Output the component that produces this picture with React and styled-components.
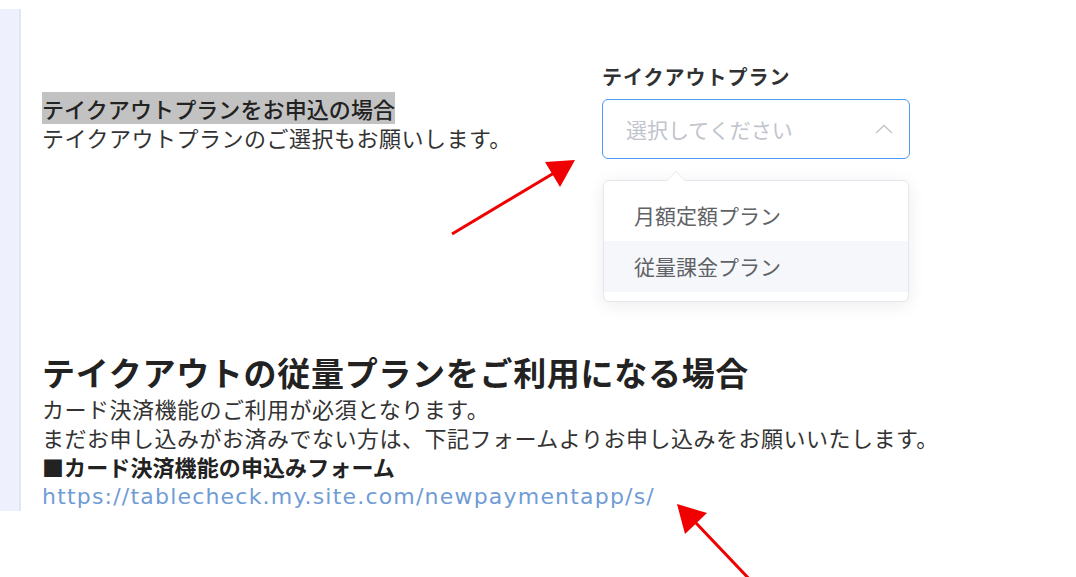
import React from 'react';
import styled, { createGlobalStyle } from 'styled-components';

const GlobalStyle = createGlobalStyle`
  body {
    margin: 0;
    background: #ffffff;
    font-family: "Noto Sans CJK JP", "DejaVu Sans", sans-serif;
    color: #333333;
  }
`;

const Screen = styled.div`
  position: relative;
  width: 1076px;
  height: 577px;
  overflow: hidden;
`;

const Page = styled.div`
  margin-top: 9px;
  height: 502px;
  display: flex;
  overflow: hidden;
`;

const Sidebar = styled.aside`
  width: 19px;
  flex-shrink: 0;
  background: #eef0fd;
  border-right: 2px solid #e4e6ef;
`;

const Main = styled.main`
  flex: 1;
  padding: 53px 0 0 21px;
  font-family: "Noto Sans CJK JP", sans-serif;
  font-size: 22px;
  line-height: 29px;
  color: #333333;
`;

const TopRow = styled.div`
  display: flex;
  align-items: flex-start;
`;

const Intro = styled.div`
  width: 560px;
  margin-top: 32px;
`;

const Marked = styled.span`
  background: #c2c2c2;
  color: #222222;
  font-weight: 500;
  letter-spacing: 0.1px;
`;

const Line = styled.div`
  font-weight: ${p => (p.$bold ? 700 : 400)};
  color: ${p => (p.$bold ? '#222222' : '#333333')};
  letter-spacing: ${p => (p.$bold ? '0.1px' : '0.5px')};
`;

const Field = styled.div`
  position: relative;
  width: 308px;
`;

const Label = styled.div`
  font-size: 20px;
  line-height: 30px;
  font-weight: 700;
  letter-spacing: 1px;
  color: #303133;
  margin-bottom: 7px;
`;

const Select = styled.div`
  box-sizing: border-box;
  height: 60px;
  border: 1px solid #4d9cf3;
  border-radius: 6px;
  display: flex;
  align-items: center;
  justify-content: space-between;
  padding: 0 16px 0 23px;
  font-size: 21px;
  color: #c0c4cc;
`;

const Dropdown = styled.ul`
  position: absolute;
  top: 118px;
  left: 1px;
  width: 306px;
  box-sizing: border-box;
  margin: 0;
  padding: 9px 0;
  list-style: none;
  background: #ffffff;
  border: 1px solid #e4e7ed;
  border-radius: 6px;
  box-shadow: 0 3px 18px rgba(0, 0, 0, 0.08);

  &::before,
  &::after {
    content: '';
    position: absolute;
    left: 63px;
    border-style: solid;
    border-width: 0 9px 9px 9px;
    border-color: transparent;
  }
  &::before {
    top: -10px;
    border-bottom-color: #e4e7ed;
  }
  &::after {
    top: -9px;
    border-bottom-color: #ffffff;
  }
`;

const Option = styled.li`
  height: 51px;
  line-height: 51px;
  padding: 0 30px;
  font-size: 21px;
  color: #606266;
  background: ${p => (p.$hover ? '#f5f7fa' : 'transparent')};
`;

const Heading = styled.h2`
  margin: 194px 0 3px;
  font-size: 33px;
  line-height: 38px;
  font-weight: 700;
  letter-spacing: 0.7px;
  color: #222222;
`;

const Link = styled.a`
  display: block;
  font-family: "DejaVu Sans", sans-serif;
  font-size: 22px;
  letter-spacing: 1.2px;
  color: #709cd6;
  text-decoration: none;
  margin-top: 1px;
`;

const Overlay = styled.svg`
  position: absolute;
  left: 0;
  top: 0;
  pointer-events: none;
`;

function Chevron() {
  return (
    <svg width="18" height="10" viewBox="0 0 18 10">
      <polyline points="1,9 9,1.5 17,9" fill="none" stroke="#c0c4cc" strokeWidth="1.4" />
    </svg>
  );
}

function Arrows() {
  return (
    <Overlay width="1076" height="577" viewBox="0 0 1076 577">
      <line x1="452" y1="234" x2="554" y2="173" stroke="#f00000" strokeWidth="3" />
      <polygon points="575,160 545,162 560,187" fill="#f00000" />
      <line x1="696" y1="523" x2="754" y2="584" stroke="#f00000" strokeWidth="3" />
      <polygon points="677,504 707,513 685,534" fill="#f00000" />
    </Overlay>
  );
}

export default function App() {
  return (
    <Screen>
      <GlobalStyle />
      <Page>
        <Sidebar />
        <Main>
          <TopRow>
            <Intro>
              <Line><Marked>テイクアウトプランをお申込の場合</Marked></Line>
              <Line>テイクアウトプランのご選択もお願いします。</Line>
            </Intro>
            <Field>
              <Label>テイクアウトプラン</Label>
              <Select>
                <span>選択してください</span>
                <Chevron />
              </Select>
              <Dropdown>
                <Option>月額定額プラン</Option>
                <Option $hover>従量課金プラン</Option>
              </Dropdown>
            </Field>
          </TopRow>
          <Heading>テイクアウトの従量プランをご利用になる場合</Heading>
          <Line>カード決済機能のご利用が必須となります。</Line>
          <Line>まだお申し込みがお済みでない方は、下記フォームよりお申し込みをお願いいたします。</Line>
          <Line $bold>■カード決済機能の申込みフォーム</Line>
          <Link href="#">https://tablecheck.my.site.com/newpaymentapp/s/</Link>
        </Main>
      </Page>
      <Arrows />
    </Screen>
  );
}
